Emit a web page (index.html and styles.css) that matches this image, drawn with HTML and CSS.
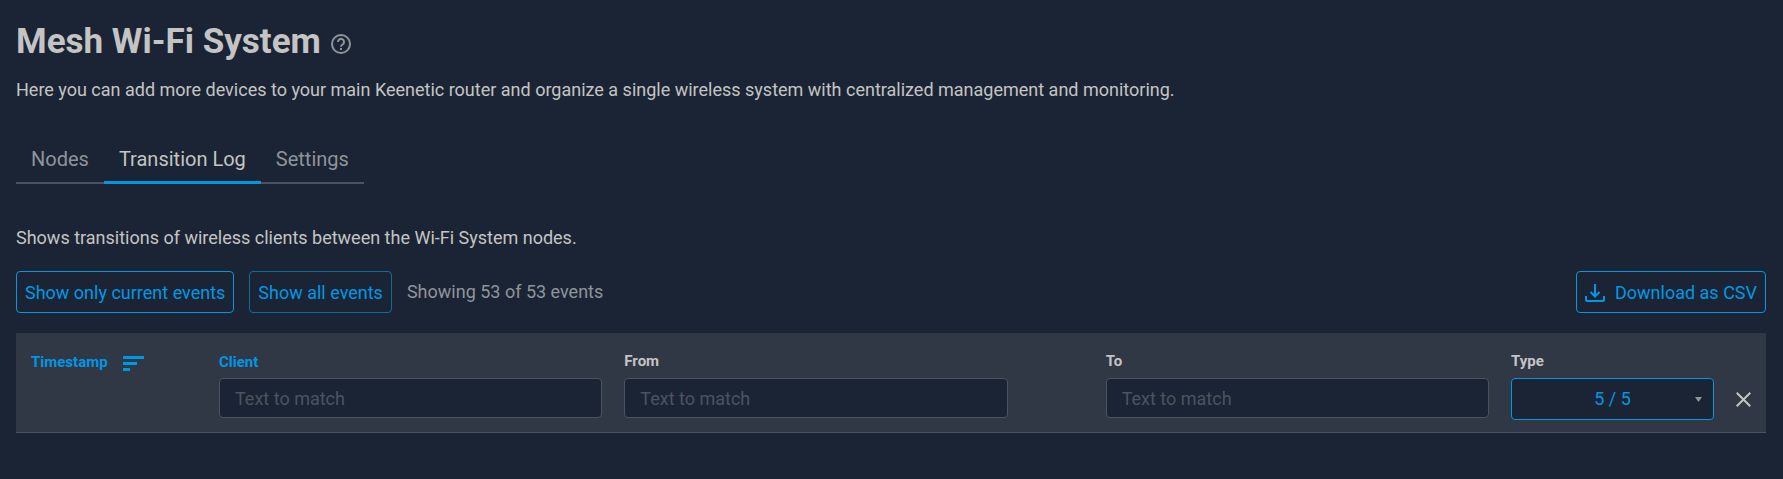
FILE: index.html
```html
<!DOCTYPE html>
<html lang="en">
<head>
    <meta charset="UTF-8">
    <meta name="viewport" content="width=device-width, initial-scale=1.0">
    <title>Mesh Wi-Fi System</title>
    <link rel="stylesheet" href="styles.css">
</head>
<body>
    <main class="page">
        <header class="page-header">
            <h1 class="title">Mesh Wi-Fi System</h1>
            <button type="button" class="icon-button help" aria-label="Help">
                <svg class="help-icon" width="20" height="20" viewBox="0 0 20 20">
                    <circle cx="10" cy="10" r="9"/>
                    <path d="M7 8a3 3 0 1 1 4.800 2.300C10.700 11.100 10 11.500 10 12.700"/>
                    <path d="M10 14v2"/>
                </svg>
            </button>
        </header>
        <p class="text">Here you can add more devices to your main Keenetic router and organize a single wireless system with centralized management and monitoring.</p>

        <nav class="tabs">
            <a class="tab" href="#nodes">Nodes</a>
            <a class="tab active" href="#log">Transition Log</a>
            <a class="tab" href="#settings">Settings</a>
        </nav>

        <p class="text">Shows transitions of wireless clients between the Wi-Fi System nodes.</p>

        <!-- Toolbar -->
        <div class="toolbar">
            <button type="button" class="btn">Show only current events</button>
            <button type="button" class="btn btn-dim">Show all events</button>
            <span class="counter">Showing 53 of 53 events</span>
            <button type="button" class="btn btn-download">
                <svg class="download-icon" width="20" height="18" viewBox="0 0 20 18">
                    <path d="M10 0v12M5.500 8l4.500 4.500L14.500 8M1 12v4q0 1 1 1h16q1 0 1-1v-4"/>
                </svg>
                Download as CSV
            </button>
        </div>

        <!-- Transition log -->
        <table class="log">
            <colgroup>
                <col class="col-time">
                <col>
                <col>
                <col class="col-arrow">
                <col>
                <col class="col-type">
            </colgroup>
            <thead>
                <tr>
                    <th>
                        <button type="button" class="sort">
                            Timestamp
                            <svg class="sort-icon" width="21" height="15" viewBox="0 0 21 15">
                                <path d="M0 0h21v3H0zM0 6h14v3H0zM0 12h7v3H0z"/>
                            </svg>
                        </button>
                    </th>
                    <th>
                        <button type="button" class="sort">Client</button>
                        <input class="filter" type="text" placeholder="Text to match" aria-label="Client">
                    </th>
                    <th>
                        <label class="label" for="from">From</label>
                        <input class="filter" type="text" id="from" placeholder="Text to match">
                    </th>
                    <td></td>
                    <th>
                        <label class="label" for="to">To</label>
                        <input class="filter" type="text" id="to" placeholder="Text to match">
                    </th>
                    <th>
                        <label class="label" for="type">Type</label>
                        <div class="type-row">
                            <div class="select">
                                <select id="type">
                                    <option>5 / 5</option>
                                </select>
                                <svg class="caret" width="7" height="5" viewBox="0 0 7 5">
                                    <path d="M0 0h7L3.500 5z"/>
                                </svg>
                            </div>
                            <button type="button" class="icon-button" aria-label="Clear filters">
                                <svg class="close-icon" width="15" height="15" viewBox="0 0 15 15">
                                    <path d="M.7.700l13.600 13.600M14.300.700L.7 14.300"/>
                                </svg>
                            </button>
                        </div>
                    </th>
                </tr>
            </thead>
            <tbody></tbody>
        </table>
    </main>
</body>
</html>
```
FILE: styles.css
```css
* {
    box-sizing: border-box;
}

body {
    margin: 0;
    background-color: #1b2434;
    color: #c4c4c4;
    font-family: Roboto, "Liberation Sans", sans-serif;
    font-size: 18px;
    line-height: 24px;
}

button, input, select {
    font: inherit;
}

button {
    cursor: pointer;
}

.page {
    padding: 20px 17px 20px 16px;
}

.page-header {
    display: flex;
    align-items: center;
    gap: 10px;
    margin-bottom: 14px;
}

.title {
    margin: 0;
    font-size: 35px;
    line-height: 44px;
    font-weight: 700;
}

.icon-button {
    display: flex;
    padding: 0;
    border: none;
    background: none;
}

.help {
    padding-top: 4px;
}

.help-icon, .download-icon, .close-icon {
    fill: none;
    stroke: #8f949b;
    stroke-width: 2;
}

.text {
    margin: 0;
}

.tabs {
    display: flex;
    width: fit-content;
    margin: 32px 0 42px;
    box-shadow: inset 0 -2px #4a5260;
}

.tab {
    padding: 13px 15px;
    color: #8f949b;
    font-size: 20px;
    text-decoration: none;
}

.tab.active {
    color: #c4c4c4;
    box-shadow: inset 0 -3px #0098e4;
}

/* Toolbar */
.toolbar {
    display: flex;
    align-items: center;
    gap: 15px;
    margin: 21px 0 20px;
}

.btn {
    display: flex;
    align-items: center;
    gap: 10px;
    height: 42px;
    padding: 2px 8px 0;
    border: 1px solid #0098e4;
    border-radius: 4px;
    background: none;
    color: #0098e4;
}

.btn-dim {
    border-color: #0f6b9f;
}

.btn-download {
    margin-left: auto;
}

.download-icon {
    stroke: #0098e4;
}

.counter {
    color: #8f949b;
}

/* Log table */
.log {
    width: 100%;
    table-layout: fixed;
    border-collapse: collapse;
    background-color: #303745;
    border-bottom: 1px solid #4c5360;
}

.log th {
    height: 99px;
    padding: 17px 11px 0;
    text-align: left;
    vertical-align: top;
    font-weight: 400;
}

.log th:first-child {
    padding-left: 15px;
}

.col-time {
    width: 192px;
}

.col-arrow {
    width: 76px;
}

.col-type {
    width: 266px;
}

.label, .sort {
    display: block;
    height: 22px;
    margin-bottom: 6px;
    font-size: 15px;
    font-weight: 700;
    line-height: 22px;
}

.sort {
    display: flex;
    align-items: center;
    gap: 15px;
    padding: 1px 0 0;
    border: none;
    background: none;
    color: #0098e4;
}

.sort-icon {
    fill: #0098e4;
    margin-top: 4px;
}

.filter {
    display: block;
    width: 100%;
    height: 40px;
    padding: 0 15px;
    border: 1px solid #4c5360;
    border-radius: 4px;
    background-color: #1b2434;
    color: #c4c4c4;
}

.filter::placeholder {
    color: #4c5360;
    opacity: 1;
}

.type-row {
    display: flex;
    align-items: center;
    gap: 22px;
    padding-right: 4px;
}

.select {
    position: relative;
    flex: 1;
}

.select select {
    display: block;
    width: 100%;
    height: 42px;
    padding: 0;
    appearance: none;
    border: 1px solid #0098e4;
    border-radius: 4px;
    background-color: #1b2434;
    color: #0098e4;
    text-align-last: center;
}

.caret {
    position: absolute;
    right: 12px;
    top: 19px;
    fill: #8f949b;
    pointer-events: none;
}

.close-icon {
    stroke: #c4c4c4;
}
```
